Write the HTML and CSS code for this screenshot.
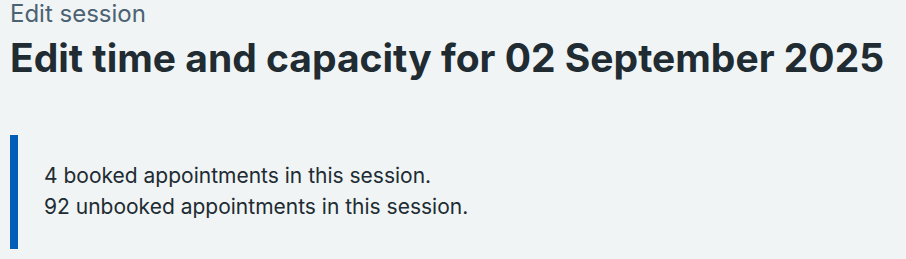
FILE: index.html
```html
<!DOCTYPE html>
<html lang="en">
<head>
    <meta charset="UTF-8">
    <meta name="viewport" content="width=device-width, initial-scale=1.0">
    <title>Edit session</title>
    <link rel="stylesheet" href="styles.css">
</head>
<body>
    <main class="page">
        <span class="caption">Edit session</span>
        <h1 class="heading">Edit time and capacity for 02 September 2025</h1>

        <div class="inset-text">
            <p>4 booked appointments in this session.</p>
            <p>92 unbooked appointments in this session.</p>
        </div>
    </main>
</body>
</html>
```

FILE: styles.css
```css
body {
    font-family: Inter, "Liberation Sans", Arial, sans-serif;
    margin: 0;
    padding: 0;
    background-color: #f0f4f5;
    color: #212b32;
}

.page {
    padding: 2px 10px 0;
}

.caption {
    display: block;
    font-size: 24px;
    line-height: 24px;
    color: #4c6272;
    margin-bottom: 10px;
}

.heading {
    font-size: 39px;
    line-height: 44px;
    font-weight: 700;
    margin: 0 0 55px;
    white-space: nowrap;
}

.inset-text {
    border-left: 8px solid #005eb8;
    padding: 25px 24px 27px 26px;
}

.inset-text p {
    margin: 0;
    font-size: 21px;
    line-height: 31px;
}
```
